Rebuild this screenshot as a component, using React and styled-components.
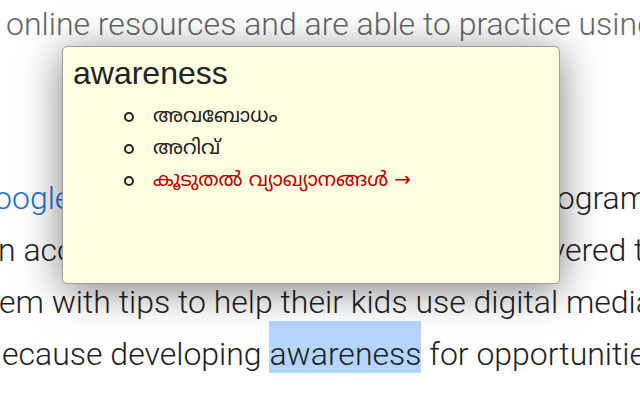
import React from "react";
import styled, { createGlobalStyle } from "styled-components";

const Global = createGlobalStyle`
  html, body { margin: 0; padding: 0; background: #ffffff; }
  body { width: 640px; height: 400px; overflow: hidden; }
`;

const Page = styled.div`
  position: relative;
  width: 640px;
  height: 400px;
  overflow: hidden;
  font-family: Roboto, "Liberation Sans", sans-serif;
  font-size: 32px;
  font-weight: 300;
  line-height: 52px;
  color: #1e1e1e;
  white-space: nowrap;
`;

const Para = styled.div`
  margin-top: ${(p) => p.$top || 0}px;
  color: ${(p) => p.$color || "#1e1e1e"};
`;

const Line = styled.div`
  text-indent: ${(p) => p.$indent || 0}px;
`;

const Link = styled.span`
  color: #1a6fd6;
`;

const Mark = styled.span`
  background: #b4d5fd;
  padding-top: 14px;
`;

const Popup = styled.div`
  position: absolute;
  left: 62px;
  top: 46px;
  width: 476px;
  height: 217px;
  padding: 7px 10px 12px 10px;
  background: #fffee0;
  border: 1px solid #9e9e9e;
  border-radius: 5px;
  box-shadow: 0 6px 40px rgba(0, 0, 0, 0.5);
  white-space: normal;
  font-family: "Liberation Sans", Arial, sans-serif;
  font-weight: 400;
  color: #222222;
`;

const Title = styled.div`
  font-size: 32px;
  line-height: 38px;
`;

const List = styled.ul`
  margin: 10px 0 0 0;
  padding-left: 80px;
  list-style: none;
  font-family: "Noto Sans Malayalam", "Noto Sans", "DejaVu Sans", sans-serif;
  font-size: 20px;
  line-height: 32px;
`;

const Item = styled.li`
  position: relative;
  color: ${(p) => (p.$link ? "#bb0000" : "#222222")};
  &::before {
    content: "";
    position: absolute;
    left: -29px;
    top: 10px;
    width: 6px;
    height: 6px;
    border: 2px solid #222222;
    border-radius: 50%;
  }
`;

export default function App() {
  return (
    <>
      <Global />
      <Page>
        <Para $color="#666666" $top={-2}>
          <Line $indent={6}>online resources and are able to practice using it</Line>
        </Para>
        <Para $top={122}>
          <Line $indent={-6}>
            <Link>oogle</Link> offers the Be Internet Awesome programs
          </Line>
          <Line $indent={-2}>n accessible format and are now all delivered to</Line>
          <Line $indent={-1}>em with tips to help their kids use digital media</Line>
          <Line $indent={2}>
            ecause developing <Mark>awareness</Mark> for opportunities
          </Line>
          <Line>some</Line>
        </Para>
        <Popup>
          <Title>awareness</Title>
          <List>
            <Item>അവബോധം</Item>
            <Item>അറിവ്</Item>
            <Item $link>കൂടുതൽ വ്യാഖ്യാനങ്ങൾ →</Item>
          </List>
        </Popup>
      </Page>
    </>
  );
}
